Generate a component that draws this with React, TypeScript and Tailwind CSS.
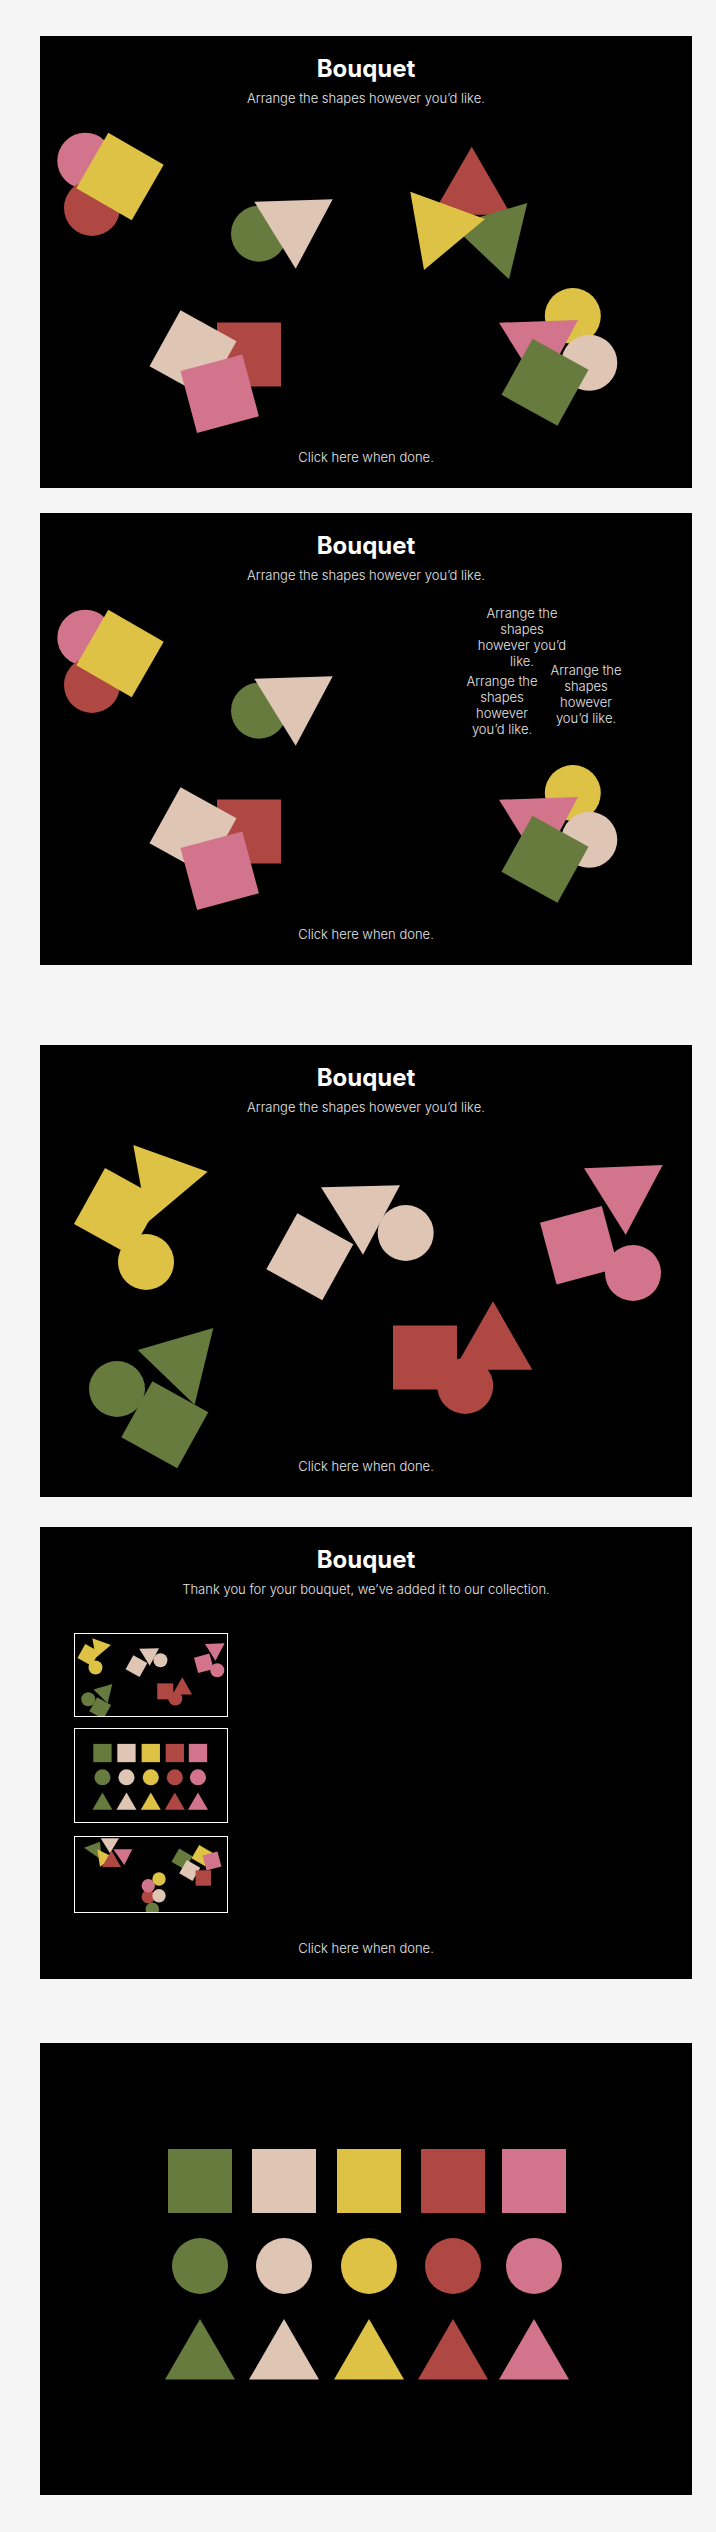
import clsx from "clsx";
import type { ReactNode } from "react";

const G = "#667b3d";
const B = "#dec5b4";
const Y = "#dec246";
const R = "#af4843";
const P = "#d2748b";

type Shape =
  | { k: "sq"; c: string; x: number; y: number; r?: number }
  | { k: "ci"; c: string; x: number; y: number }
  | { k: "tr"; c: string; p: number[] };

// first arrangement (panel coords)
const lowerShapes: Shape[] = [
  { k: "ci", c: P, x: 45.3, y: 124.7 },
  { k: "ci", c: R, x: 52, y: 172 },
  { k: "sq", c: Y, x: 80, y: 140.5, r: 30 },
  { k: "ci", c: G, x: 219, y: 197.7 },
  { k: "tr", c: B, p: [214.3, 165.7, 292.7, 163.3, 255.7, 232.7] },
  { k: "ci", c: Y, x: 532.8, y: 280 },
  { k: "ci", c: B, x: 549.3, y: 326.8 },
  { k: "tr", c: P, p: [459, 286.7, 538, 284, 500.8, 353.7] },
  { k: "sq", c: G, x: 505, y: 346.3, r: 29 },
  { k: "sq", c: R, x: 209, y: 318.5 },
  { k: "sq", c: B, x: 153, y: 317.8, r: 29 },
  { k: "sq", c: P, x: 179.7, y: 357.7, r: -15 },
];

const triangles: Shape[] = [
  { k: "tr", c: R, p: [431.7, 110.7, 392.4, 178.7, 471, 178.7] },
  { k: "tr", c: G, p: [487.3, 167, 469, 243.3, 412, 189.3] },
  { k: "tr", c: Y, p: [370.3, 155.7, 445, 183, 384, 234] },
];

const groupedShapes: Shape[] = [
  { k: "sq", c: Y, x: 77.5, y: 166.5, r: 29 },
  { k: "tr", c: Y, p: [93.3, 100, 167.7, 126.7, 107.4, 177.6] },
  { k: "ci", c: Y, x: 106, y: 217 },
  { k: "tr", c: G, p: [173.3, 283, 97.7, 305, 154.6, 359.7] },
  { k: "ci", c: G, x: 77, y: 344 },
  { k: "sq", c: G, x: 124.8, y: 379.7, r: 29 },
  { k: "sq", c: B, x: 269.8, y: 211.7, r: 29 },
  { k: "tr", c: B, p: [281, 142.3, 360, 140.3, 323, 209.7] },
  { k: "ci", c: B, x: 365.7, y: 188 },
  { k: "tr", c: P, p: [544, 123.3, 622.7, 120, 585.7, 189.7] },
  { k: "sq", c: P, x: 539.2, y: 200.3, r: -15 },
  { k: "ci", c: P, x: 593, y: 228 },
  { k: "sq", c: R, x: 385, y: 312.5 },
  { k: "tr", c: R, p: [453, 256.3, 414, 324.7, 492.3, 324.7] },
  { k: "ci", c: R, x: 425.2, y: 341 },
];

const cols = [160, 244, 329, 413, 494];
const palette = [G, B, Y, R, P];
const gridShapes: Shape[] = [
  ...cols.map((x, i): Shape => ({ k: "sq", c: palette[i], x, y: 138 })),
  ...cols.map((x, i): Shape => ({ k: "ci", c: palette[i], x, y: 223 })),
  ...cols.map((x, i): Shape => ({ k: "tr", c: palette[i], p: [x, 276, x + 35, 336.6, x - 35, 336.6] })),
];

const messyShapes: Shape[] = [
  { k: "tr", c: G, p: [10, 11.7, 26, 5.7, 27.7, 24] },
  { k: "tr", c: B, p: [26.7, 2.3, 45, 2.3, 36, 17.3] },
  { k: "tr", c: Y, p: [23.3, 13.3, 39.3, 21.3, 26, 30.7] },
  { k: "tr", c: R, p: [37.5, 14.5, 47, 31, 28, 31] },
  { k: "tr", c: P, p: [39.3, 13.3, 58.3, 13.3, 50.3, 29] },
  { k: "sq", c: G, x: 108, y: 23, r: 30 },
  { k: "sq", c: Y, x: 128, y: 19.5, r: 30 },
  { k: "sq", c: P, x: 138, y: 25, r: -15 },
  { k: "sq", c: B, x: 115.7, y: 34.5, r: 30 },
  { k: "sq", c: R, x: 129.3, y: 42 },
  { k: "ci", c: Y, x: 85, y: 43 },
  { k: "ci", c: R, x: 74.3, y: 60.7 },
  { k: "ci", c: P, x: 74.3, y: 49.7 },
  { k: "ci", c: B, x: 85, y: 59.7 },
  { k: "ci", c: G, x: 78.3, y: 73.3 },
];

function Draw({ shapes, sq = 64, rad = 28 }: { shapes: Shape[]; sq?: number; rad?: number }) {
  return (
    <>
      {shapes.map((s, i) => {
        if (s.k === "sq")
          return (
            <rect
              key={i}
              x={s.x - sq / 2}
              y={s.y - sq / 2}
              width={sq}
              height={sq}
              fill={s.c}
              transform={`rotate(${s.r ?? 0} ${s.x} ${s.y})`}
            />
          );
        if (s.k === "ci") return <circle key={i} cx={s.x} cy={s.y} r={rad} fill={s.c} />;
        return <polygon key={i} points={s.p.join(" ")} fill={s.c} />;
      })}
    </>
  );
}

function Panel({ children, className }: { children: ReactNode; className?: string }) {
  return (
    <div className={clsx("relative ml-10 flex h-[452px] w-[652px] flex-col items-center bg-black", className)}>
      {children}
    </div>
  );
}

function Canvas({ shapes }: { shapes: Shape[] }) {
  return (
    <svg className="absolute inset-0" width={652} height={452} viewBox="0 0 652 452">
      <Draw shapes={shapes} />
    </svg>
  );
}

function Header({ text = "Arrange the shapes however you’d like." }: { text?: string }) {
  return (
    <>
      <h1 className="relative pt-[17px] text-2xl leading-8 font-bold text-white">Bouquet</h1>
      <p className="relative mt-[3px] text-[13px] leading-5 font-light text-[#e6e6e6]">{text}</p>
    </>
  );
}

function Done() {
  return (
    <p className="relative mt-auto mb-[21px] text-[13px] leading-5 font-light text-[#e6e6e6]">
      Click here when done.
    </p>
  );
}

function Thumb({ h, viewBox, children, className }: { h: string; viewBox: string; children: ReactNode; className?: string }) {
  return (
    <div className={clsx("w-[154px] border border-white bg-black", h, className)}>
      <svg className="block h-full w-full" viewBox={viewBox} preserveAspectRatio="none">
        {children}
      </svg>
    </div>
  );
}

export default function App() {
  return (
    <div className="min-h-screen bg-[#f5f5f5] pt-9 pb-[37px] font-['Inter',sans-serif] antialiased">
      {/* arranging */}
      <Panel>
        <Canvas shapes={[...lowerShapes.slice(0, 5), ...triangles, ...lowerShapes.slice(5)]} />
        <Header />
        <Done />
      </Panel>

      {/* triangles replaced by text */}
      <Panel className="mt-[25px]">
        <Canvas shapes={lowerShapes} />
        <Header />
        <div className="absolute top-[92px] left-[432px] w-[100px] text-center text-[13px] leading-4 font-light text-[#e6e6e6]">
          Arrange the<br />shapes<br />however you’d<br />like.
        </div>
        <div className="absolute top-[160px] left-[412px] w-[100px] text-center text-[13px] leading-4 font-light text-[#e6e6e6]">
          Arrange the<br />shapes<br />however<br />you’d like.
        </div>
        <div className="absolute top-[149px] left-[496px] w-[100px] text-center text-[13px] leading-4 font-light text-[#e6e6e6]">
          Arrange the<br />shapes<br />however<br />you’d like.
        </div>
        <Done />
      </Panel>

      {/* grouped by colour */}
      <Panel className="mt-20">
        <Canvas shapes={groupedShapes} />
        <Header />
        <Done />
      </Panel>

      {/* collection */}
      <Panel className="mt-[30px]">
        <Header text="Thank you for your bouquet, we’ve added it to our collection." />
        <div className="mt-[34px] flex w-full flex-col items-start px-[34px]">
          <Thumb h="h-[84px]" viewBox="24 83 608 328">
            <Draw shapes={groupedShapes} />
          </Thumb>
          <Thumb h="h-[95px]" viewBox="64 54 531.5 325.2" className="mt-[11px]">
            <Draw shapes={gridShapes} />
          </Thumb>
          <Thumb h="h-[77px]" viewBox="1 1 152 75" className="mt-[13px]">
            <Draw shapes={messyShapes} sq={15.4} rad={6.7} />
          </Thumb>
        </div>
        <Done />
      </Panel>

      {/* palette */}
      <Panel className="mt-16">
        <Canvas shapes={gridShapes} />
      </Panel>
    </div>
  );
}
